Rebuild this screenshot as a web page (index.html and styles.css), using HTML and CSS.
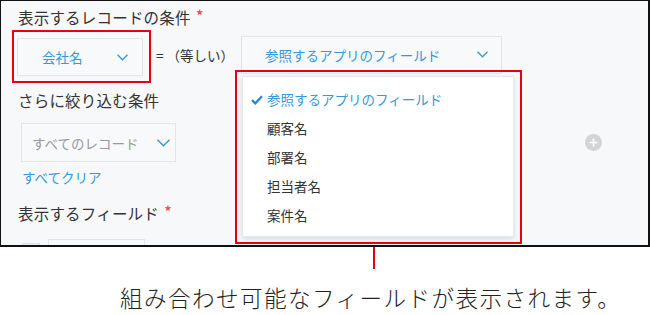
FILE: index.html
```html
<!DOCTYPE html>
<html lang="ja">
<head>
<meta charset="utf-8">
<link rel="stylesheet" href="styles.css">
</head>
<body>
<div class="frame">
  <div class="heading">表示するレコードの条件<span class="req">*</span></div>
  <div class="cond-row">
    <div class="mark mark-field">
      <div class="select select-field">
        <span class="select-text">会社名</span>
        <svg class="chev" width="11" height="7" viewBox="0 0 11 7"><polyline points="0.5,0.8 5.5,5.8 10.5,0.8" fill="none" stroke="#3498db" stroke-width="1.3"/></svg>
      </div>
    </div>
    <span class="op">= （等しい）</span>
    <div class="select select-ref">
      <span class="select-text">参照するアプリのフィールド</span>
      <svg class="chev" width="11" height="7" viewBox="0 0 11 7"><polyline points="0.5,0.8 5.5,5.8 10.5,0.8" fill="none" stroke="#3498db" stroke-width="1.3"/></svg>
    </div>
  </div>
  <div class="subheading">さらに絞り込む条件</div>
  <div class="filter-row">
    <div class="select select-filter">
      <span class="placeholder">すべてのレコード</span>
      <svg class="chev" width="13" height="8" viewBox="0 0 13 8"><polyline points="0.5,0.8 6.5,6.8 12.5,0.8" fill="none" stroke="#3498db" stroke-width="1.4"/></svg>
    </div>
    <span class="add-btn">
      <svg width="17" height="17" viewBox="0 0 17 17"><circle cx="8.5" cy="8.5" r="8.5" fill="#d2d4d6"/><path d="M8.5 4.5v8M4.5 8.5h8" stroke="#fff" stroke-width="1.6"/></svg>
    </span>
  </div>
  <a class="clear">すべてクリア</a>
  <div class="heading heading-fields">表示するフィールド<span class="req">*</span></div>
  <div class="fields-row"><span class="handle"></span><span class="field-input"></span></div>

  <div class="mark mark-menu"></div>
  <ul class="menu">
    <li class="menu-item selected">
      <svg class="check" width="12" height="10" viewBox="0 0 12 10"><path d="M1 5.2 L4.3 8.4 L11 1.2" fill="none" stroke="#2a88cf" stroke-width="2.3"/></svg>
      参照するアプリのフィールド
    </li>
    <li class="menu-item">顧客名</li>
    <li class="menu-item">部署名</li>
    <li class="menu-item">担当者名</li>
    <li class="menu-item">案件名</li>
  </ul>
</div>
<div class="callout">
  <div class="leader"></div>
  <p class="caption">組み合わせ可能なフィールドが表示されます。</p>
</div>
</body>
</html>
```
FILE: styles.css
```css
* { box-sizing: border-box; }
html, body { margin: 0; padding: 0; background: #fff; }
body {
  width: 650px;
  height: 315px;
  overflow: hidden;
  font-family: "Noto Sans CJK JP", "Noto Sans", sans-serif;
  color: #333;
}
.frame {
  position: relative;
  width: 650px;
  height: 247px;
  border: 1px solid #111;
  border-right-width: 2px;
  border-bottom-width: 2px;
  background: #f7f8fa;
  padding: 6px 0 0 11px;
  overflow: hidden;
  display: flex;
  flex-direction: column;
  align-items: flex-start;
}
.heading, .subheading {
  font-size: 15.5px;
  line-height: 20px;
  margin-left: 6px;
  color: #333;
  letter-spacing: 0.2px;
  white-space: nowrap;
}
.req {
  color: #e74c3c;
  margin-left: 5px;
  font-size: 17px;
  position: relative;
  top: -1px;
}
.cond-row {
  display: flex;
  align-items: center;
  margin-top: 3px;
}
.mark {
  border: 2px solid #e60012;
}
.mark-field {
  padding: 6px 6px 5px 3px;
}
.select {
  display: flex;
  align-items: center;
  justify-content: space-between;
  background: #f7f9fa;
  border: 1px solid #e2e5e8;
  font-size: 13.5px;
  color: #3498db;
  white-space: nowrap;
}
.select-field {
  width: 126px;
  height: 38px;
  padding: 0 14px 0 24px;
}
.op {
  font-size: 13.5px;
  color: #333;
  margin-left: 5px;
  width: 85px;
  white-space: nowrap;
  margin-top: -4px;
}
.select-ref {
  width: 261px;
  height: 38px;
  padding: 0 13px 0 23px;
  margin-top: -4px;
}
.subheading { margin-top: 7px; }
.filter-row {
  display: flex;
  align-items: center;
  margin-top: 13px;
  margin-left: 9px;
}
.select-filter {
  width: 155px;
  height: 39px;
  padding: 0 5px 0 10px;
  background: #f8f9fa;
}
.placeholder { color: #9a9a9a; }
.add-btn {
  display: flex;
  margin-left: 409px;
}
.clear {
  font-size: 13.5px;
  line-height: 18px;
  color: #3498db;
  margin: 6px 0 0 10px;
}
.heading-fields { margin-top: 17px; }
.fields-row {
  display: flex;
  align-items: flex-start;
  margin: 16px 0 0 10px;
}
.handle {
  width: 18px;
  height: 12px;
  margin-top: 4px;
  border: 1px solid #dcdfe2;
  background: #eceef0;
}
.field-input {
  width: 97px;
  height: 30px;
  margin-left: 8px;
  border: 1px solid #e2e5e8;
  background: #f8f9fa;
}
.mark-menu {
  position: absolute;
  left: 234px;
  top: 69px;
  width: 287px;
  height: 174px;
}
.menu {
  position: absolute;
  left: 241px;
  top: 75px;
  width: 272px;
  height: 161px;
  margin: 0;
  padding: 8px 0 0 24px;
  list-style: none;
  background: #fff;
  border: 1px solid #e6e8ea;
  box-shadow: 0 2px 5px rgba(0, 0, 0, 0.12);
}
.menu-item {
  position: relative;
  height: 29px;
  line-height: 29px;
  font-size: 13.5px;
  color: #333;
  white-space: nowrap;
}
.menu-item.selected { color: #3498db; }
.check {
  position: absolute;
  left: -16px;
  top: 10px;
}
.callout {
  position: relative;
}
.leader {
  width: 2px;
  height: 22px;
  margin-left: 373px;
  background: #e60012;
}
.caption {
  margin: 14px 0 0 120px;
  font-size: 22.6px;
  line-height: 30px;
  letter-spacing: 1.4px;
  font-weight: 300;
  color: #222;
  white-space: nowrap;
}
```
